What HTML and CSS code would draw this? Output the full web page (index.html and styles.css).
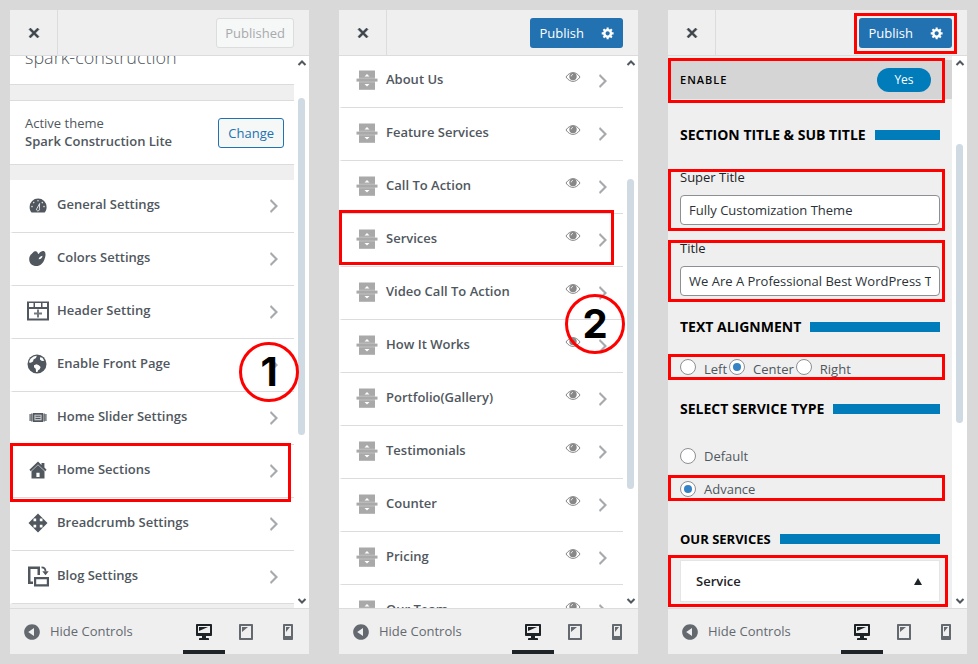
FILE: index.html
```
<!DOCTYPE html>
<html lang="en">
<head>
  <meta charset="UTF-8">
  <meta name="viewport" content="width=device-width, initial-scale=1.0">
  <title>Customizer Steps</title>
  <link rel="stylesheet" href="styles.css">
</head>
<body>

<!-- icon set -->
<svg class="icon-set" aria-hidden="true">
  <symbol id="close" viewBox="0 0 20 20"><path d="M14.95 6.46L11.41 10l3.54 3.54-1.41 1.41L10 11.42l-3.53 3.53-1.42-1.42L8.58 10 5.05 6.47l1.42-1.42L10 8.58l3.54-3.53z" stroke="currentColor" stroke-width=".6"/></symbol>
  <symbol id="gear" viewBox="0 0 20 20"><path d="M18 12h-2.18c-.17.7-.44 1.35-.81 1.93l1.54 1.54-2.1 2.1-1.54-1.54c-.58.36-1.23.63-1.91.79V19H8v-2.18c-.68-.16-1.33-.43-1.91-.79l-1.54 1.54-2.12-2.12 1.54-1.54c-.36-.58-.63-1.23-.79-1.91H1V9.03h2.17c.16-.7.44-1.35.8-1.94L2.43 5.55l2.1-2.1 1.54 1.54c.58-.37 1.24-.64 1.93-.81V2h3v2.18c.68.16 1.33.43 1.91.79l1.54-1.54 2.12 2.12-1.54 1.54c.36.59.64 1.24.8 1.94H18V12zm-8.5 1.5c1.66 0 3-1.34 3-3s-1.34-3-3-3-3 1.34-3 3 1.34 3 3 3z"/></symbol>
  <symbol id="chevron" viewBox="0 0 20 20"><path d="M6 15l5-5-5-5 1-2 7 7-7 7z"/></symbol>
  <symbol id="up" viewBox="0 0 10 10"><path d="M1.500 7L5 3.500 8.500 7" fill="none" stroke="currentColor" stroke-width="2"/></symbol>
  <symbol id="down" viewBox="0 0 10 10"><path d="M1.500 3L5 6.500 8.500 3" fill="none" stroke="currentColor" stroke-width="2"/></symbol>
  <symbol id="collapse" viewBox="0 0 20 20"><path d="M10 2.160c4.330 0 7.840 3.510 7.840 7.840s-3.510 7.840-7.840 7.840S2.160 14.330 2.160 10 5.710 2.160 10 2.160zm2 11.720V6.120L6.180 9.970z"/></symbol>
  <symbol id="desktop" viewBox="0 0 20 20"><path d="M3 2h14c.55 0 1 .45 1 1v10c0 .55-.45 1-1 1h-5v2h2c.55 0 1 .45 1 1v1H5v-1c0-.55.45-1 1-1h2v-2H3c-.55 0-1-.45-1-1V3c0-.55.45-1 1-1zm13 9V4H4v7h12zM5 5h9L5 9V5z"/></symbol>
  <symbol id="tablet" viewBox="0 0 20 20"><path d="M4 2h12c.55 0 1 .45 1 1v14c0 .55-.45 1-1 1H4c-.55 0-1-.45-1-1V3c0-.55.45-1 1-1zm11 14V4H5v12h10zM6 5h6l-6 5V5z"/></symbol>
  <symbol id="phone" viewBox="0 0 20 20"><path d="M6 2h8c.55 0 1 .45 1 1v14c0 .55-.45 1-1 1H6c-.55 0-1-.45-1-1V3c0-.55.45-1 1-1zm7 12V4H7v10h6zM8 5h4l-4 5V5z"/></symbol>
  <symbol id="dashboard" viewBox="0 0 22 22">
    <path d="M4.500 18.500C3.200 17 2.600 15 2.600 13a8.500 8.500 0 0 1 17 0c0 2-.6 4-1.900 5.500z"/>
    <g fill="#ddd"><circle cx="11" cy="6.800" r=".8"/><circle cx="6.700" cy="8.600" r=".8"/><circle cx="15.300" cy="8.600" r=".8"/><circle cx="5" cy="12.600" r=".8"/><circle cx="17" cy="12.600" r=".8"/></g>
    <path d="M12.600 9.500l-.2 5.300a1.500 1.500 0 1 1-2.300-.6z" fill="none" stroke="#fff" stroke-width=".8"/>
  </symbol>
  <symbol id="palette" viewBox="0 0 22 22">
    <path d="M7.200 4.600C8.800 3.700 10.500 4.400 10.800 6.200C11 7.300 11.600 7.200 12.200 6.300C13.600 4.200 16 3.300 17.400 4.400C19.200 5.900 18.600 9.500 17.400 12.500C15.900 16.500 13.200 19 9.500 19C5.200 19 2.200 16.200 2.200 12.200C2.200 10 3 8 4.600 7C5.600 6.400 6 5.200 7.200 4.600z"/>
    <path d="M11.600 12.200c.3-1.900 1.900-3.200 3.900-3.500-.2 2.100-1.700 3.600-3.900 3.500z" fill="#fff"/>
  </symbol>
  <symbol id="header" viewBox="0 0 22 22">
    <path fill-rule="evenodd" d="M0 1.500h22v19H0zM2 3v4h4.500V3zM8 3v4h6V3zm7.500 0v4H20V3zM2 9V18.500h18V9z"/>
    <path d="M11 9.500v8M7 13.500h8" stroke="currentColor" stroke-width="2" opacity=".8"/>
  </symbol>
  <symbol id="globe" viewBox="0 0 22 22">
    <circle cx="10" cy="11" r="9.500"/>
    <g fill="#fff"><path d="M3.600 5.800L6.600 3.400 9.800 2.800 9 5 6.500 6.500 6 8.500 3.800 9.700 2 9.500C2.200 8 2.700 6.800 3.600 5.800z"/><path d="M13 4.200l2.400.5 1.900 3-2.300.2-1.900-1.200z"/><path d="M7 12.200l2.500-.9 2.300.9 1.800 1.800-.9 2.300-1.600.9-.6 1.700-1.400.1-.4-3.200-1.700-1.500z"/></g>
  </symbol>
  <symbol id="slider" viewBox="0 0 22 22">
    <path fill-rule="evenodd" d="M6 7h10v9H6zm1.500 1.800v5.400h7V8.800z"/><path d="M2.500 8h1.200v7H2.500zM4.200 7.500h1.400v8H4.200zM16.400 7.500h1.400v8h-1.400zM18.300 8h1.200v7h-1.200zM8.500 9.800h5v1h-5zM8.500 12h5v1h-5z"/>
    <path d="M7.500 8.800h7v5.400h-7z" opacity=".35"/>
  </symbol>
  <symbol id="home" viewBox="0 0 22 22">
    <path d="M11 2.500L2.400 10.800l1.400 1.500L11 5.400l7.200 6.900 1.400-1.500-2.200-2.300V4H14.500v2z"/>
    <path fill-rule="evenodd" d="M11 6.100L4.500 12.300v7.200h13v-7.200zM9.400 13.800h3.200v4.200H9.400z"/>
  </symbol>
  <symbol id="move" viewBox="0 0 22 22"><path d="M20.500 11l-5 5v-3.200h-2.700v2.700H16l-5 5-5-5h3.200v-2.700H6.500V16l-5-5 5-5v3.200h2.700V6.500H6l5-5 5 5h-3.200v2.700h2.700V6z"/></symbol>
  <symbol id="blog" viewBox="0 0 22 22">
    <path fill-rule="evenodd" d="M1 1.500h12V10h-2.500V4h-7v12.500H6V19H1z"/>
    <path fill-rule="evenodd" d="M7 12h15v9.500H7zm2.200 2.200v5.100h10.600v-5.100z"/>
    <path d="M14.500 2.300c3 0 4 1.700 4 4" fill="none" stroke="currentColor" stroke-width="1.800"/><path d="M15.300 6.300h6.400l-3.200 4z"/>
  </symbol>
  <symbol id="section" viewBox="0 0 22 22">
    <path d="M3 1.500h16v19.300H3z"/><path d="M.5 9.600h21v3H.5z"/>
    <path d="M3 9.200h16M3 13h16" stroke="#fff" stroke-width=".5" opacity=".6"/>
    <path d="M8.500 7.500h5L11 5zM8.500 14.900h5L11 17.400z" fill="#fff"/>
  </symbol>
  <symbol id="eye" viewBox="0 0 16 12">
    <path d="M1 6c2-3 4.500-4.400 7-4.400S13 3 15 6c-2 3-4.500 4.400-7 4.400S3 9 1 6z" fill="none" stroke="currentColor"/>
    <circle cx="8" cy="5.500" r="3.700"/><path d="M6.200 5.300c0-1 .7-1.800 1.800-1.800" fill="none" stroke="#fff" stroke-width=".9"/>
  </symbol>
</svg>

<main class="steps">

  <!-- step 1 -->
  <section class="panel">
    <header class="panel-header">
      <button class="close" aria-label="Close"><svg class="icon"><use href="#close"/></svg></button>
      <button class="btn published" disabled>Published</button>
    </header>
    <div class="panel-body">
      <div class="content home-content">
        <h1 class="site-title">spark-construction</h1>
        <div class="theme">
          <p>Active theme<strong>Spark Construction Lite</strong></p>
          <button class="btn change">Change</button>
        </div>
        <ul class="menu">
          <li><a href="#"><svg class="item-icon"><use href="#dashboard"/></svg><span>General Settings</span><svg class="chevron"><use href="#chevron"/></svg></a></li>
          <li><a href="#"><svg class="item-icon"><use href="#palette"/></svg><span>Colors Settings</span><svg class="chevron"><use href="#chevron"/></svg></a></li>
          <li><a href="#"><svg class="item-icon"><use href="#header"/></svg><span>Header Setting</span><svg class="chevron"><use href="#chevron"/></svg></a></li>
          <li><a href="#"><svg class="item-icon"><use href="#globe"/></svg><span>Enable Front Page</span><svg class="chevron"><use href="#chevron"/></svg></a></li>
          <li><a href="#"><svg class="item-icon"><use href="#slider"/></svg><span>Home Slider Settings</span><svg class="chevron"><use href="#chevron"/></svg></a></li>
          <li class="marked mark-home"><a href="#"><svg class="item-icon"><use href="#home"/></svg><span>Home Sections</span><svg class="chevron"><use href="#chevron"/></svg></a></li>
          <li><a href="#"><svg class="item-icon"><use href="#move"/></svg><span>Breadcrumb Settings</span><svg class="chevron"><use href="#chevron"/></svg></a></li>
          <li><a href="#"><svg class="item-icon"><use href="#blog"/></svg><span>Blog Settings</span><svg class="chevron"><use href="#chevron"/></svg></a></li>
        </ul>
      </div>
      <div class="scrollbar">
        <svg><use href="#up"/></svg>
        <div class="track"><div class="thumb thumb-1"></div></div>
        <svg><use href="#down"/></svg>
      </div>
    </div>
    <footer class="panel-footer">
      <button class="hide"><svg class="icon"><use href="#collapse"/></svg><span>Hide Controls</span></button>
      <div class="devices">
        <button class="active" aria-label="Desktop"><svg class="icon"><use href="#desktop"/></svg></button>
        <button aria-label="Tablet"><svg class="icon"><use href="#tablet"/></svg></button>
        <button aria-label="Mobile"><svg class="icon"><use href="#phone"/></svg></button>
      </div>
    </footer>
    <div class="step-number step-1">1</div>
  </section>

  <!-- step 2 -->
  <section class="panel">
    <header class="panel-header">
      <button class="close" aria-label="Close"><svg class="icon"><use href="#close"/></svg></button>
      <div class="publish-group">
        <button class="publish">Publish</button>
        <button class="gear" aria-label="Publish settings"><svg><use href="#gear"/></svg></button>
      </div>
    </header>
    <div class="panel-body">
      <div class="content section-content">
        <ul class="menu sections">
          <li><a href="#"><svg class="item-icon"><use href="#section"/></svg><span>About Us</span><svg class="eye"><use href="#eye"/></svg><svg class="chevron"><use href="#chevron"/></svg></a></li>
          <li><a href="#"><svg class="item-icon"><use href="#section"/></svg><span>Feature Services</span><svg class="eye"><use href="#eye"/></svg><svg class="chevron"><use href="#chevron"/></svg></a></li>
          <li><a href="#"><svg class="item-icon"><use href="#section"/></svg><span>Call To Action</span><svg class="eye"><use href="#eye"/></svg><svg class="chevron"><use href="#chevron"/></svg></a></li>
          <li class="marked mark-services"><a href="#"><svg class="item-icon"><use href="#section"/></svg><span>Services</span><svg class="eye"><use href="#eye"/></svg><svg class="chevron"><use href="#chevron"/></svg></a></li>
          <li><a href="#"><svg class="item-icon"><use href="#section"/></svg><span>Video Call To Action</span><svg class="eye"><use href="#eye"/></svg><svg class="chevron"><use href="#chevron"/></svg></a></li>
          <li><a href="#"><svg class="item-icon"><use href="#section"/></svg><span>How It Works</span><svg class="eye"><use href="#eye"/></svg><svg class="chevron"><use href="#chevron"/></svg></a></li>
          <li><a href="#"><svg class="item-icon"><use href="#section"/></svg><span>Portfolio(Gallery)</span><svg class="eye"><use href="#eye"/></svg><svg class="chevron"><use href="#chevron"/></svg></a></li>
          <li><a href="#"><svg class="item-icon"><use href="#section"/></svg><span>Testimonials</span><svg class="eye"><use href="#eye"/></svg><svg class="chevron"><use href="#chevron"/></svg></a></li>
          <li><a href="#"><svg class="item-icon"><use href="#section"/></svg><span>Counter</span><svg class="eye"><use href="#eye"/></svg><svg class="chevron"><use href="#chevron"/></svg></a></li>
          <li><a href="#"><svg class="item-icon"><use href="#section"/></svg><span>Pricing</span><svg class="eye"><use href="#eye"/></svg><svg class="chevron"><use href="#chevron"/></svg></a></li>
          <li><a href="#"><svg class="item-icon"><use href="#section"/></svg><span>Our Team</span><svg class="eye"><use href="#eye"/></svg><svg class="chevron"><use href="#chevron"/></svg></a></li>
        </ul>
      </div>
      <div class="scrollbar">
        <svg><use href="#up"/></svg>
        <div class="track"><div class="thumb thumb-2"></div></div>
        <svg><use href="#down"/></svg>
      </div>
    </div>
    <footer class="panel-footer">
      <button class="hide"><svg class="icon"><use href="#collapse"/></svg><span>Hide Controls</span></button>
      <div class="devices">
        <button class="active" aria-label="Desktop"><svg class="icon"><use href="#desktop"/></svg></button>
        <button aria-label="Tablet"><svg class="icon"><use href="#tablet"/></svg></button>
        <button aria-label="Mobile"><svg class="icon"><use href="#phone"/></svg></button>
      </div>
    </footer>
    <div class="step-number step-2">2</div>
  </section>

  <!-- step 3 -->
  <section class="panel">
    <header class="panel-header">
      <button class="close" aria-label="Close"><svg class="icon"><use href="#close"/></svg></button>
      <div class="publish-group marked mark-publish">
        <button class="publish">Publish</button>
        <button class="gear" aria-label="Publish settings"><svg><use href="#gear"/></svg></button>
      </div>
    </header>
    <div class="panel-body">
      <form class="content controls">
        <div class="enable marked mark-enable">
          <span>Enable</span>
          <button type="button" class="switch">Yes</button>
        </div>

        <h2 class="after-enable">Section Title &amp; Sub Title</h2>
        <div class="field marked">
          <label for="super-title">Super Title</label>
          <input type="text" id="super-title" value="Fully Customization Theme">
        </div>
        <div class="field marked">
          <label for="title">Title</label>
          <input type="text" id="title" value="We Are A Professional Best WordPress Theme">
        </div>

        <h2>Text Alignment</h2>
        <div class="radio-row align-row marked">
          <input type="radio" name="align" id="left"><label for="left">Left</label>
          <input type="radio" name="align" id="center" checked><label for="center">Center</label>
          <input type="radio" name="align" id="right"><label for="right">Right</label>
        </div>

        <h2>Select Service Type</h2>
        <div class="radio-row type-row">
          <input type="radio" name="type" id="default"><label for="default">Default</label>
        </div>
        <div class="radio-row advance-row marked">
          <input type="radio" name="type" id="advance" checked><label for="advance">Advance</label>
        </div>

        <h2 class="services-title">Our Services</h2>
        <div class="accordion marked">
          <button type="button">Service<svg viewBox="0 0 8 7"><path d="M4 0l4 7H0z"/></svg></button>
        </div>
      </form>
      <div class="scrollbar">
        <svg><use href="#up"/></svg>
        <div class="track"><div class="thumb thumb-3"></div></div>
        <svg><use href="#down"/></svg>
      </div>
    </div>
    <footer class="panel-footer">
      <button class="hide"><svg class="icon"><use href="#collapse"/></svg><span>Hide Controls</span></button>
      <div class="devices">
        <button class="active" aria-label="Desktop"><svg class="icon"><use href="#desktop"/></svg></button>
        <button aria-label="Tablet"><svg class="icon"><use href="#tablet"/></svg></button>
        <button aria-label="Mobile"><svg class="icon"><use href="#phone"/></svg></button>
      </div>
    </footer>
  </section>

</main>
</body>
</html>
```
FILE: styles.css
```
* {
  box-sizing: border-box;
}

body {
  margin: 0;
  background-color: #d9d9d9;
  color: #50575e;
  font-family: "Open Sans", "Noto Sans", sans-serif;
  font-size: 13px;
  line-height: 20px;
}

button {
  margin: 0;
  padding: 0;
  border: none;
  background: none;
  color: inherit;
  font: inherit;
  cursor: pointer;
}

svg {
  display: block;
  flex: none;
  fill: currentColor;
}

.icon-set {
  display: none;
}

.icon {
  width: 20px;
  height: 20px;
}

/* Three panels side by side */
.steps {
  display: grid;
  grid-template-columns: repeat(3, 1fr);
  gap: 30px;
  height: 100vh;
  padding: 10px 11px 10px 10px;
}

.panel {
  position: relative;
  display: flex;
  flex-direction: column;
  min-width: 0;
  min-height: 0;
  background-color: #fff;
}

/* Header */
.panel-header {
  display: flex;
  flex: none;
  justify-content: space-between;
  align-items: center;
  height: 46px;
  padding-right: 15px;
  background-color: #efefef;
  border-bottom: 1px solid #dcdcde;
}

.close {
  display: flex;
  align-items: center;
  justify-content: center;
  align-self: stretch;
  width: 48px;
  border-right: 1px solid #dcdcde;
  color: #3c434a;
}

.btn {
  height: 30px;
  padding: 0 9px;
  border: 1px solid #dcdcde;
  border-radius: 3px;
  background-color: #f6f7f7;
}

.published {
  padding: 0 8px;
  color: #a7aaad;
}

.change {
  border-color: #2271b1;
  color: #2271b1;
}

.publish-group {
  display: flex;
  height: 30px;
  border-radius: 3px;
  background-color: #2271b1;
  color: #fff;
}

.publish {
  padding: 0 9px 0 10px;
}

.gear {
  display: flex;
  align-items: center;
  justify-content: center;
  width: 30px;
}

.gear svg {
  width: 14px;
  height: 14px;
}

/* Scrolling area */
.panel-body {
  display: flex;
  flex: 1;
  min-height: 0;
  overflow: hidden;
}

.content {
  flex: 1;
  min-width: 0;
}

.scrollbar {
  display: flex;
  flex: none;
  flex-direction: column;
  align-items: center;
  width: 15px;
  padding: 1px 0;
  background-color: #fff;
  color: #50575e;
}

.scrollbar svg {
  width: 10px;
  height: 12px;
}

.track {
  flex: 1;
  width: 7px;
}

.thumb {
  border-radius: 4px;
  background-color: #d0dae3;
}

.thumb-1 {
  height: 64%;
  margin-top: 29px;
}

.thumb-2 {
  height: 59%;
  margin-top: 110px;
}

.thumb-3 {
  height: 53%;
  margin-top: 75px;
}

/* Step 1 */
.home-content {
  margin-top: -11px;
  background-color: #efefef;
}

.site-title {
  margin: 0 0 15px;
  padding: 0 15px 15px;
  border-bottom: 1px solid #dcdcde;
  background-color: #fff;
  font-size: 18px;
  font-weight: 300;
  line-height: 24px;
}

.theme {
  display: flex;
  justify-content: space-between;
  align-items: center;
  height: 65px;
  margin-bottom: 15px;
  padding: 1px 10px 0 15px;
  border-top: 1px solid #dcdcde;
  border-bottom: 1px solid #dcdcde;
  background-color: #fff;
}

.theme p {
  margin: 0 0 3px;
  line-height: 18px;
}

.theme strong {
  display: block;
  font-weight: 600;
}

.menu {
  margin: 0;
  padding: 0;
  background-color: #fff;
  list-style: none;
}

.menu li a {
  display: flex;
  align-items: center;
  height: 53px;
  padding: 0 10px 3px 14px;
  border-left: 3px solid transparent;
  border-bottom: 1px solid #dcdcde;
  color: #50575e;
  font-weight: 600;
  text-decoration: none;
}

.menu span {
  flex: 1;
  margin: 0 0 2px 8px;
}

.item-icon {
  width: 22px;
  height: 22px;
}

.chevron {
  width: 20px;
  height: 20px;
  margin-top: 3px;
  color: #a7aaad;
}

/* Step 2 */
.section-content {
  margin-top: -1px;
}

.sections .item-icon {
  color: #a9a9a9;
}

.eye {
  width: 16px;
  height: 12px;
  margin: 0 12px 6px 0;
  color: #888;
}

/* Step 3 */
.controls {
  padding-top: 4px;
  background-color: #efefef;
}

.enable {
  display: flex;
  justify-content: space-between;
  align-items: center;
  height: 39px;
  padding: 0 21px 0 12px;
  background-color: #d5d5d5;
  color: #000;
}

.enable span {
  font-size: 11px;
  font-weight: 600;
  letter-spacing: 1px;
  text-transform: uppercase;
}

.switch {
  width: 54px;
  height: 24px;
  border-radius: 12px;
  background-color: #007cba;
  color: #fff;
  font-size: 12px;
}

.controls h2 {
  display: flex;
  align-items: center;
  margin: 21px 12px 20px;
  color: #000;
  font-size: 14px;
  font-weight: 700;
  line-height: 20px;
  text-transform: uppercase;
}

.controls h2::after {
  content: "";
  flex: 1;
  height: 10px;
  margin-left: 9px;
  background-color: #007cba;
}

.controls .after-enable {
  margin: 26px 12px 22px;
}

.field {
  padding: 0 12px;
  color: #1d2327;
}

.field + .field {
  margin-top: 13px;
}

.field label {
  display: block;
  margin-bottom: 8px;
}

.field input {
  display: block;
  width: 100%;
  height: 30px;
  padding: 0 8px;
  border: 1px solid #8c8f94;
  border-radius: 4px;
  background-color: #fff;
  color: #2c3338;
  font: inherit;
}

.radio-row {
  display: flex;
  align-items: center;
  height: 20px;
  padding: 0 12px;
}

.radio-row input {
  appearance: none;
  display: flex;
  align-items: center;
  justify-content: center;
  width: 16px;
  height: 16px;
  margin: 0 8px 0 0;
  border: 1px solid #8c8f94;
  border-radius: 50%;
  background-color: #fff;
}

.radio-row input:checked::before {
  content: "";
  width: 8px;
  height: 8px;
  border-radius: 50%;
  background-color: #3582c4;
}

.radio-row label {
  margin-right: 2px;
}

.align-row {
  height: 21px;
}

.align-row input {
  margin-bottom: 1px;
}

.align-row label {
  padding-top: 3px;
}

.type-row {
  margin: 27px 0 13px;
}

.controls .services-title {
  margin: 30px 12px 11px;
  font-size: 13px;
}

.accordion {
  padding: 0 12px;
}

.accordion button {
  display: flex;
  justify-content: space-between;
  align-items: center;
  width: 100%;
  height: 42px;
  padding: 0 17px 0 15px;
  border: 1px solid #e5e5e5;
  background-color: #fff;
  color: #1d2327;
  font-weight: 600;
}

.accordion svg {
  width: 8px;
  height: 7px;
}

/* Footer */
.panel-footer {
  display: flex;
  flex: none;
  justify-content: space-between;
  height: 46px;
  padding-left: 12px;
  background-color: #efefef;
  border-top: 1px solid #dcdcde;
}

.hide {
  display: flex;
  align-items: center;
  gap: 8px;
  color: #646970;
}

.hide span {
  margin-bottom: 2px;
}

.devices {
  display: flex;
}

.devices button {
  display: flex;
  align-items: center;
  justify-content: center;
  width: 42px;
  padding-top: 4px;
  border-bottom: 4px solid transparent;
  color: #646970;
}

.devices .active {
  border-color: #1d2327;
  color: #1d2327;
}

/* Red outlines and step numbers */
.marked {
  position: relative;
}

.marked::after {
  content: "";
  position: absolute;
  z-index: 1;
  border: 3px solid #f00;
  pointer-events: none;
}

.mark-home::after {
  inset: -2px 3px -4px 0;
}

.mark-services::after {
  inset: -4px 9px 2px 0;
}

.mark-publish::after {
  inset: -5px -5px -6px;
}

.mark-enable::after {
  inset: -2px 7px -4px 0;
}

.field.marked::after {
  inset: 2px 7px -6px 0;
}

.align-row::after {
  inset: -3px 7px -2px 0;
}

.advance-row::after {
  inset: -4px 7px -2px 0;
}

.accordion::after {
  inset: -5px 4px -5px 0;
}

.step-number {
  position: absolute;
  z-index: 2;
  width: 60px;
  height: 60px;
  border: 3px solid #f00;
  border-radius: 50%;
  color: #000;
  font-family: Inter, sans-serif;
  font-size: 40px;
  font-weight: 700;
  line-height: 54px;
  text-align: center;
}

.step-1 {
  top: 332px;
  right: 10px;
}

.step-2 {
  top: 284px;
  right: 13px;
}
```
